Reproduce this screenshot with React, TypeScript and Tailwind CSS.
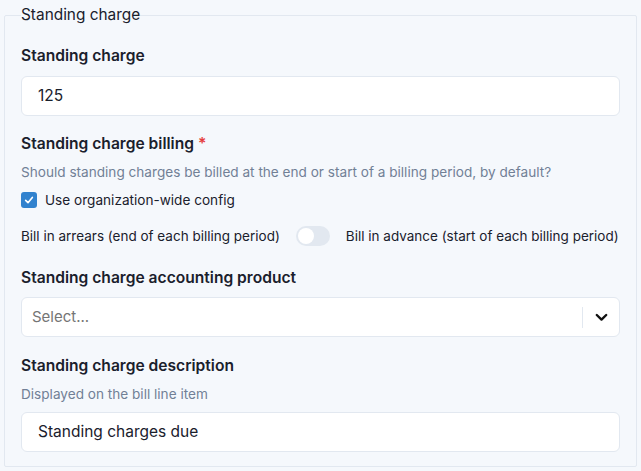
import React from "react";

export default function App() {
  return (
    <div
      className="w-[641px] h-[471px] bg-[#f5f8fc] text-[#1a202c] overflow-hidden"
      style={{ fontFamily: "Inter, 'Noto Sans', sans-serif" }}
    >
      <fieldset className="m-1 h-[463px] border border-[#e2e8f0] rounded-[2px] px-4 pb-4">
        <legend className="text-[15.4px] leading-[22px] text-[#1a202c]">Standing charge</legend>

        <div className="mt-[20px] text-[15.6px] leading-5 font-semibold">Standing charge</div>
        <div className="mt-[10px] h-10 rounded-md border border-[#e2e8f0] bg-white flex items-center px-4 text-[15.5px]">
          125
        </div>

        <div className="mt-[18px] text-[15.6px] leading-5 font-semibold">
          Standing charge billing <span className="text-[#e53e3e]">*</span>
        </div>
        <div className="mt-[8px] text-[13.6px] leading-5 text-[#718096] whitespace-nowrap">
          Should standing charges be billed at the end or start of a billing period, by default?
        </div>
        <div className="mt-[8px] flex items-center gap-2 h-5">
          <span className="w-4 h-4 rounded-[3px] bg-[#3182ce] flex items-center justify-center">
            <svg width="10" height="10" viewBox="0 0 12 12" fill="none">
              <path d="M2 6.5 L4.8 9.2 L10 3" stroke="white" strokeWidth="2" strokeLinecap="round" strokeLinejoin="round" />
            </svg>
          </span>
          <span className="text-[13.6px]">Use organization-wide config</span>
        </div>
        <div className="mt-[16px] flex items-center h-5 text-[13.5px] whitespace-nowrap">
          <span className="shrink-0">Bill in arrears (end of each billing period)</span>
          <span className="shrink-0 ml-4 mr-4 w-[34px] h-5 rounded-full bg-[#e2e8f0] flex items-center p-[2px]">
            <span className="w-4 h-4 rounded-full bg-white"></span>
          </span>
          <span className="shrink-0">Bill in advance (start of each billing period)</span>
        </div>

        <div className="mt-[22px] text-[15.6px] leading-5 font-semibold">Standing charge accounting product</div>
        <div className="mt-[9px] h-10 rounded-md border border-[#e2e8f0] bg-white flex items-center">
          <span className="flex-1 pl-[10px] text-[15px] text-[#757575]">Select...</span>
          <span className="w-px h-[21px] bg-[#e2e8f0]"></span>
          <span className="w-9 flex items-center justify-center">
            <svg width="13" height="9" viewBox="0 0 13 9" fill="none">
              <path d="M1.8 2 L6.5 6.6 L11.2 2" stroke="#111" strokeWidth="2.4" strokeLinecap="round" strokeLinejoin="round" />
            </svg>
          </span>
        </div>

        <div className="mt-[19px] text-[15.6px] leading-5 font-semibold">Standing charge description</div>
        <div className="mt-[8px] text-[13.6px] leading-5 text-[#718096]">Displayed on the bill line item</div>
        <div className="mt-[8px] h-10 rounded-md border border-[#e2e8f0] bg-white flex items-center px-4 text-[15.5px]">
          Standing charges due
        </div>
      </fieldset>
    </div>
  );
}
